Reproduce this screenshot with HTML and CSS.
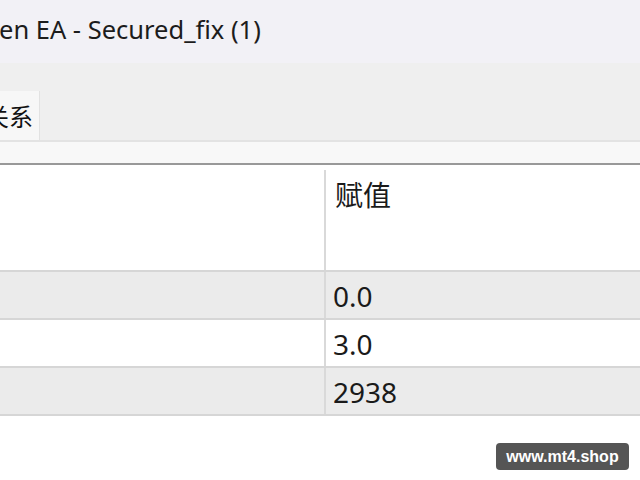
FILE: index.html
```html
<!DOCTYPE html>
<html lang="zh">
<head>
<meta charset="utf-8">
<title>EA</title>
<link rel="stylesheet" href="styles.css">
</head>
<body>
<div class="page">
  <div class="titlebar"><span class="title">en EA - Secured_fix (1)</span></div>
  <div class="tabs">
    <div class="tab"><span class="tab-label">关系</span></div>
  </div>
  <div class="strip"></div>
  <div class="table">
    <div class="row head">
      <div class="cell name"></div>
      <div class="cell value">赋值</div>
    </div>
    <div class="row alt">
      <div class="cell name"></div>
      <div class="cell value">0.0</div>
    </div>
    <div class="row">
      <div class="cell name"></div>
      <div class="cell value">3.0</div>
    </div>
    <div class="row alt">
      <div class="cell name"></div>
      <div class="cell value">2938</div>
    </div>
  </div>
  <div class="watermark">www.mt4.shop</div>
</div>
</body>
</html>
```

FILE: styles.css
```css
html, body {
  margin: 0;
  padding: 0;
  background: #ffffff;
}
.page {
  position: relative;
  width: 640px;
  height: 480px;
  overflow: hidden;
  font-family: "Noto Sans", "Noto Sans CJK SC", sans-serif;
  color: #1a1a1a;
}
.titlebar {
  height: 63px;
  background: #f2f1f6;
  box-sizing: border-box;
  padding-top: 14px;
  white-space: nowrap;
}
.title {
  display: inline-block;
  margin-left: -1px;
  font-size: 25.5px;
  line-height: 30px;
  color: #1c1c1c;
}
.tabs {
  height: 77px;
  background: #efefef;
  border-bottom: 2px solid #e3e3e3;
  display: flex;
  align-items: flex-end;
}
.tab {
  width: 40px;
  height: 49px;
  box-sizing: border-box;
  background: #f7f7f7;
  border-right: 1px solid #e2e2e2;
  display: flex;
  justify-content: flex-end;
  align-items: center;
  padding-right: 6px;
  overflow: hidden;
  white-space: nowrap;
}
.tab-label {
  flex-shrink: 0;
  font-family: "Noto Sans CJK SC", sans-serif;
  font-size: 24px;
  line-height: 30px;
  color: #111;
}
.strip {
  height: 21px;
  background: #f8f8f8;
  border-bottom: 2px solid #999999;
}
.table {
  display: flex;
  flex-direction: column;
}
.row {
  display: flex;
  height: 46px;
  border-bottom: 2px solid #d6d6d6;
  background: #ffffff;
}
.row.alt {
  background: #ebebeb;
}
.row.head {
  height: 105px;
}
.cell {
  box-sizing: border-box;
  font-size: 28px;
  line-height: 44px;
}
.cell.name {
  width: 326px;
  border-right: 2px solid #d9d9d9;
}
.cell.value {
  flex: 1;
  padding-left: 7px;
  padding-top: 2px;
  font-family: "Noto Sans", "Noto Sans CJK SC", sans-serif;
}
.row.head .cell.value {
  padding-top: 11px;
  padding-left: 9px;
  line-height: 36px;
  font-family: "Noto Sans CJK SC", sans-serif;
}
.row.head .cell.name {
  margin-top: 5px;
}
.watermark {
  position: absolute;
  left: 496px;
  top: 443px;
  width: 133px;
  height: 27px;
  box-sizing: border-box;
  background: #555555;
  border-radius: 4px;
  color: #ffffff;
  font-family: "Liberation Sans", Arial, sans-serif;
  font-weight: bold;
  font-size: 16px;
  line-height: 27px;
  text-align: center;
}
```
